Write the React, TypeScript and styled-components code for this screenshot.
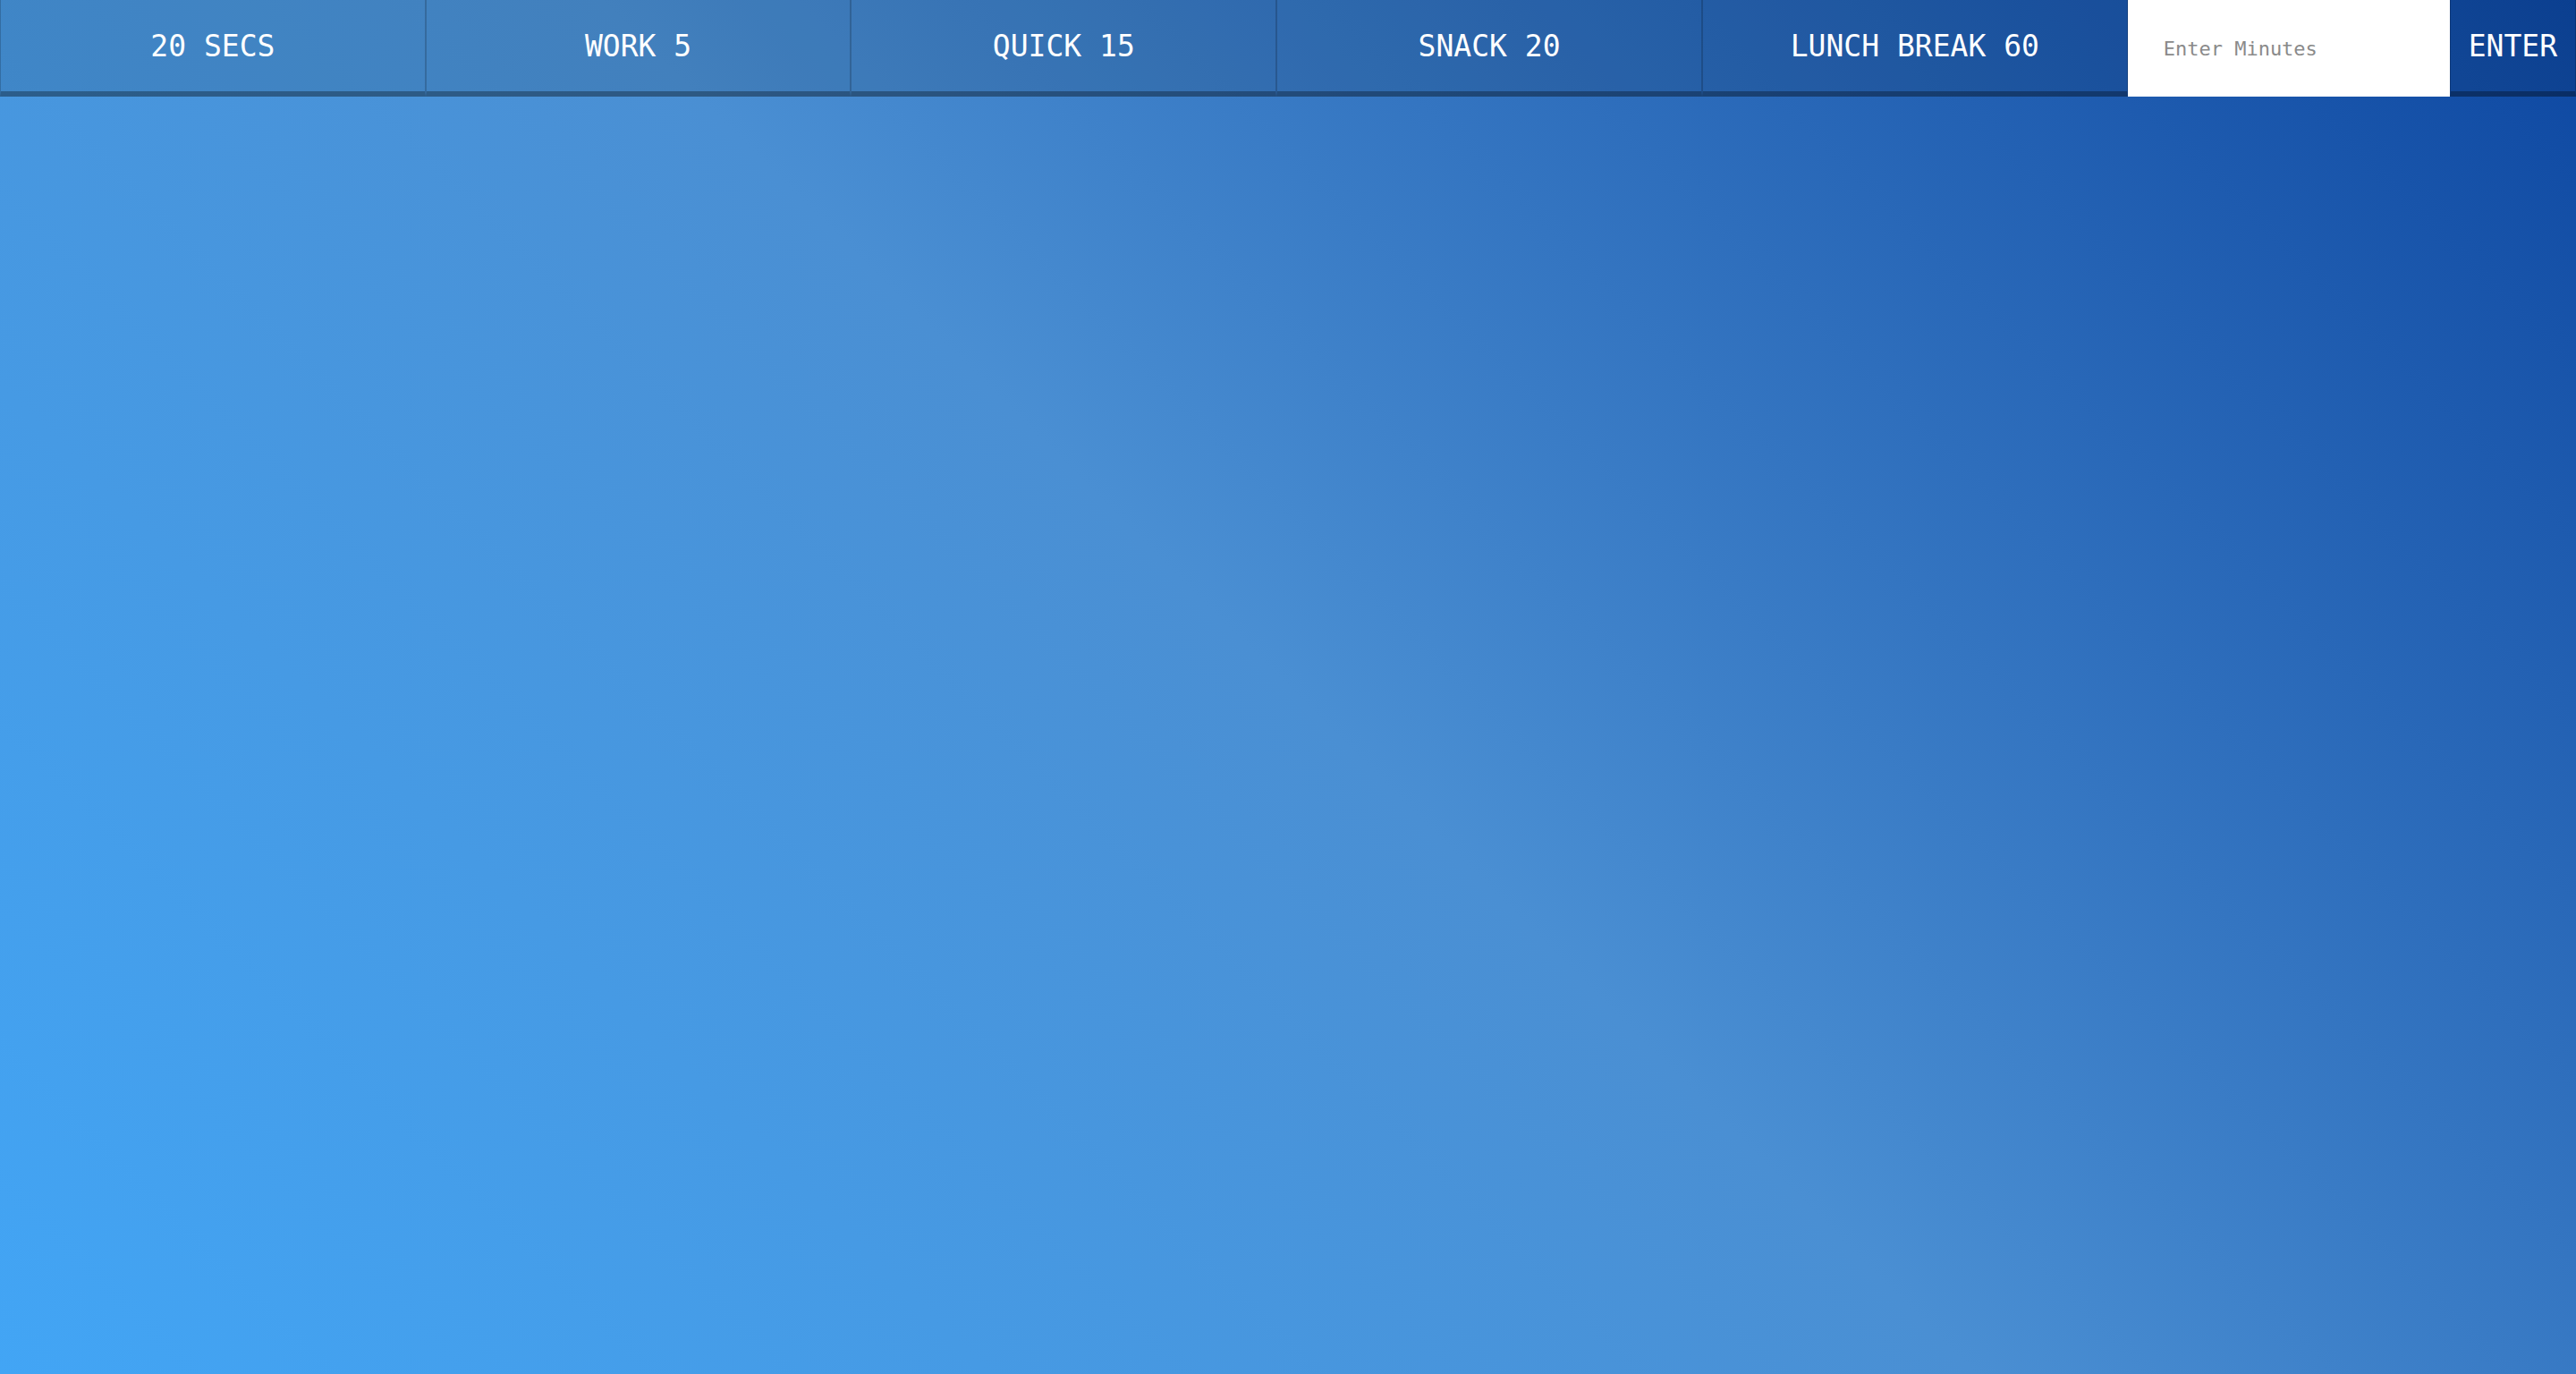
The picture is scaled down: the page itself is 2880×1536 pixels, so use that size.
import styled, { createGlobalStyle } from "styled-components";

const GlobalStyle = createGlobalStyle`
  * {
    box-sizing: border-box;
  }
  html,
  body {
    margin: 0;
    padding: 0;
    min-height: 100vh;
  }
  body {
    font-family: "DejaVu Sans Mono", "Liberation Mono", monospace;
    background: linear-gradient(45deg, #42a5f5 0%, #4a8fd3 50%, #0d47a1 100%);
    background-attachment: fixed;
  }
`;

const Page = styled.div`
  min-height: 100vh;
  display: flex;
  flex-direction: column;
`;

const Toolbar = styled.nav`
  display: flex;
  align-items: stretch;
  width: 100%;
  height: 108px;
`;

const TimerButton = styled.button<{ $grow?: boolean }>`
  flex: ${(p) => (p.$grow ? "1 1 0" : "0 0 auto")};
  height: 108px;
  padding: ${(p) => (p.$grow ? "0" : "0 20px")};
  display: flex;
  align-items: center;
  justify-content: center;
  background-color: rgba(0, 0, 0, 0.1);
  color: #ffffff;
  font-family: "DejaVu Sans Mono", "Liberation Mono", monospace;
  font-size: 33px;
  text-transform: uppercase;
  border: 1px solid rgba(0, 0, 0, 0.18);
  border-top: none;
  border-bottom: 6px solid rgba(0, 0, 0, 0.3);
  cursor: pointer;
  outline: none;
`;

const MinutesInput = styled.input`
  flex: 0 0 360px;
  width: 360px;
  height: 108px;
  padding: 0 0 0 40px;
  border: none;
  outline: none;
  background-color: #ffffff;
  color: #333;
  font-family: "DejaVu Sans Mono", "Liberation Mono", monospace;
  font-size: 22px;
  &::placeholder {
    color: #8a8a8a;
  }
`;

const presets = [
  { label: "20 Secs", seconds: 20 },
  { label: "Work 5", seconds: 300 },
  { label: "Quick 15", seconds: 900 },
  { label: "Snack 20", seconds: 1200 },
  { label: "Lunch Break 60", seconds: 3600 },
];

export default function App() {
  return (
    <>
      <GlobalStyle />
      <Page>
        <Toolbar>
          {presets.map((preset) => (
            <TimerButton key={preset.label} $grow data-time={preset.seconds}>
              {preset.label}
            </TimerButton>
          ))}
          <MinutesInput type="text" name="minutes" placeholder="Enter Minutes" />
          <TimerButton type="submit">Enter</TimerButton>
        </Toolbar>
      </Page>
    </>
  );
}
